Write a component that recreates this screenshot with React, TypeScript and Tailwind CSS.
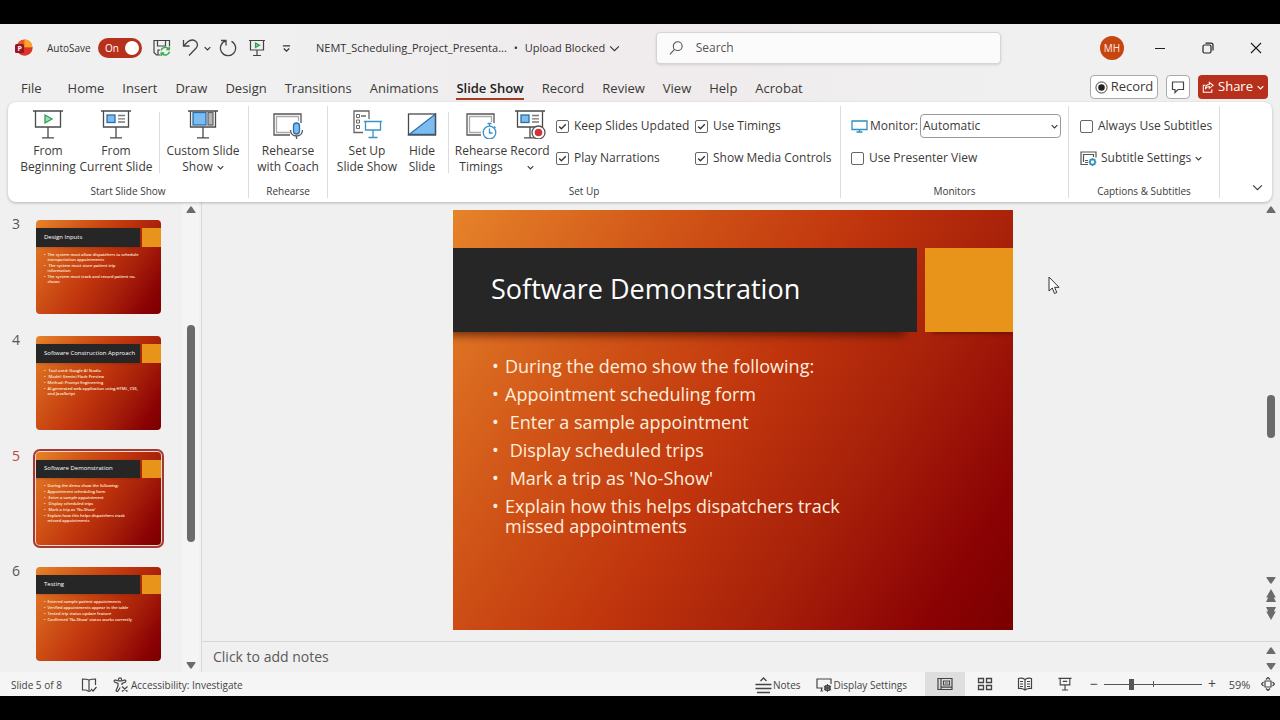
import type { ReactNode } from 'react';

const tabs = [
  'Home', 'Insert', 'Draw', 'Design', 'Transitions', 'Animations', 'Slide Show',
  'Record', 'Review', 'View', 'Help', 'Acrobat',
];

const slides = [
  {
    id: 3,
    title: 'Design Inputs',
    items: ['The system must allow dispatchers to schedule\ntransportation appointments', ' The system must store patient trip\ninformation', 'The system must track and record patient no-\nshows'],
  },
  {
    id: 4,
    title: 'Software Construction Approach',
    items: [' Tool used: Google AI Studio', ' Model: Gemini Flash Preview', 'Method: Prompt Engineering', 'AI-generated web application using HTML, CSS,\nand JavaScript'],
  },
  {
    id: 5,
    title: 'Software Demonstration',
    items: ['During the demo show the following:', 'Appointment scheduling form', ' Enter a sample appointment', ' Display scheduled trips', " Mark a trip as 'No-Show'", 'Explain how this helps dispatchers track\nmissed appointments'],
  },
  {
    id: 6,
    title: 'Testing',
    items: ['Entered sample patient appointments', 'Verified appointments appear in the table', 'Tested trip status update feature', "Confirmed 'No-Show' status works correctly"],
  },
];

const slideBg = 'bg-[linear-gradient(123deg,#e6832a_0%,#d05417_28%,#c0350d_50%,#a8220a_68%,#8b0204_89%,#7a0000_100%)]';

function Chevron({ className = 'w-2 h-2', thin = false }: { className?: string; thin?: boolean }) {
  return (
    <svg viewBox="0 0 10 10" className={className} fill="none" stroke="currentColor" strokeWidth={thin ? 1 : 1.6}>
      <path d="M1 3l4 4 4-4" />
    </svg>
  );
}

function Triangle({ down = false }: { down?: boolean }) {
  return (
    <svg viewBox="0 0 10 8" className="w-[10px] h-2 shrink-0 fill-[#6b6b6b]">
      <path d={down ? 'M1 1h8q1 0 .4 1L5.8 7.3q-.8.9-1.6 0L.6 2Q0 1 1 1z' : 'M1 7h8q1 0 .4-1L5.8.7q-.8-.9-1.6 0L.6 6Q0 7 1 7z'} />
    </svg>
  );
}

function DoubleTriangle({ down = false }: { down?: boolean }) {
  return (
    <svg viewBox="0 0 10 13" className="w-[10px] h-[13px] shrink-0 fill-[#6b6b6b]">
      <path d={down ? 'M0 0h10L7.8 4.500H9.800L5 13 .2 4.500h2z' : 'M5 0l4.800 8.500h-2L10 13H0l2.200-4.500h-2z'} />
    </svg>
  );
}

/* Projection screen on a stand, shared by most ribbon icons */
function Screen({ children }: { children?: ReactNode }) {
  return (
    <svg viewBox="0 0 32 30" className="w-8 h-[30px]" fill="none" stroke="#4a4a4a" strokeWidth="1.3">
      <path d="M3.500 2.500v15.500h25V2.500M1 2h30M16 18v10.500M10 28.800h12" />
      {children}
    </svg>
  );
}

function Content() {
  return (
    <>
      <rect x="7" y="6" width="8" height="7.5" fill="#7cbcf0" stroke="#2b6fa8" />
      <path d="M18 6.500h7M18 9.800h7M18 13h7" stroke="#777" />
    </>
  );
}

function RibbonButton({ icon, lines, width, chevron }: { icon: ReactNode; lines: string[]; width: string; chevron?: boolean }) {
  return (
    <button className={`${width} shrink-0 flex flex-col items-center text-xs leading-4 whitespace-nowrap`}>
      <span className="h-[34px] flex items-start justify-center">{icon}</span>
      {lines.map((line, i) => (
        <span key={line} className="flex items-center justify-center gap-1">
          {line}
          {chevron && i === 1 && <Chevron className="w-[7px] h-[7px]" />}
        </span>
      ))}
      {chevron && lines.length === 1 && <Chevron className="w-[7px] h-[7px] mt-[5px]" />}
    </button>
  );
}

function Group({ label, width, children }: { label: string; width: string; children: ReactNode }) {
  return (
    <div className={`${width} shrink-0 my-1 pt-[3px] border-r border-[#dcdcdc] flex flex-col`}>
      <div className="flex flex-1">{children}</div>
      <div className="h-[14px] text-center text-[10px] leading-[14px]">{label}</div>
    </div>
  );
}

function Check({ label, checked = false }: { label: string; checked?: boolean }) {
  return (
    <label className="h-8 flex items-center gap-[5px] text-xs whitespace-nowrap">
      <span className="relative w-[13px] h-[13px] shrink-0">
        <input type="checkbox" defaultChecked={checked} className="peer block w-[13px] h-[13px] appearance-none border border-[#666] rounded-[2px] bg-white" />
        <svg viewBox="0 0 13 13" className="absolute inset-0 hidden peer-checked:block pointer-events-none" fill="none" stroke="#333" strokeWidth="1.3">
          <path d="M3.200 6.500l2.200 2.300 4.400-4.600" />
        </svg>
      </span>
      {label}
    </label>
  );
}

function Thumbnail({ title, items }: { title: string; items: string[] }) {
  return (
    <div className={`w-[125px] aspect-[4/3] rounded-[4px] overflow-hidden text-left text-white flex flex-col ${slideBg}`}>
      <div className="h-[20%] mt-2 flex gap-[2px]">
        <div className="w-[83%] pl-2 bg-[#262626] flex items-center text-[6px] font-medium whitespace-nowrap shadow-sm">{title}</div>
        <div className="flex-1 bg-[#e8941a]" />
      </div>
      <ul className="pl-2 pt-[5px] flex flex-col gap-[1px] text-[4px] leading-[5px] font-semibold text-[#fdeede]">
        {items.map((item) => (
          <li key={item} className="flex gap-[2px]">
            <span>•</span>
            <span className="whitespace-pre">{item}</span>
          </li>
        ))}
      </ul>
    </div>
  );
}

function TitleBar() {
  return (
    <header className="h-12 flex items-center">
      <div className="w-[656px] shrink-0 flex items-center pl-[15px] text-[#333]">
        <svg viewBox="0 0 18 18" className="w-[18px] h-[18px]">
          <circle cx="9.5" cy="8.5" r="8" fill="#e8562a" />
          <path d="M9.500.5a8 8 0 018 8h-8z" fill="#f9a52b" />
          <path d="M17.500 8.500a8 8 0 01-14 5.300l6-5.300z" fill="#d9352a" />
          <rect y="5" width="9" height="9" rx="1.5" fill="#9c1323" />
          <text x="2.5" y="12" fontSize="7" fontWeight="700" fill="#fff" fontFamily="Open Sans, sans-serif">P</text>
        </svg>
        <span id="autosave" className="ml-[14px] w-[45px] text-[10px] whitespace-nowrap">AutoSave</span>
        <button role="switch" aria-checked="true" aria-labelledby="autosave" className="ml-[6px] w-11 h-5 rounded-full bg-[#b7301c] flex items-center justify-between pl-[7px] pr-[3px] text-[10px] text-white">
          On
          <span className="w-[14px] h-[14px] rounded-full bg-white" />
        </button>
        <button aria-label="Save" className="ml-[11px]">
          <svg viewBox="0 0 18 18" className="w-[18px] h-[18px]" fill="none" stroke="#444" strokeWidth="1.2">
            <path d="M7 16H3.500L1 13.500V1.500h15.500V7M4.500 1.500V7h8V1.500M5 16v-5h2" />
            <path d="M8 11.500a4.300 4.300 0 017.500-1.500M16.300 7.500v3h-3M16.500 12.800A4.300 4.300 0 019 14.500M8.200 17v-3h3" stroke="#3fa950" strokeWidth="1.5" />
          </svg>
        </button>
        <button aria-label="Undo" className="ml-[11px]">
          <svg viewBox="0 0 18 18" className="w-[18px] h-[18px]" fill="none" stroke="#444" strokeWidth="1.3">
            <path d="M1.500 1v6h6M1.800 6.800L5.500 3c6-5 13 1 8.500 6.300L7 16.500" />
          </svg>
        </button>
        <button aria-label="Undo options" className="ml-1"><Chevron className="w-[7px] h-[7px]" /></button>
        <button aria-label="Redo" className="ml-2">
          <svg viewBox="0 0 18 18" className="w-[18px] h-[18px]" fill="none" stroke="#444" strokeWidth="1.3">
            <path d="M2 1.500h5V6.500M6.800 1.800A7.600 7.600 0 1012.500 2.300" />
          </svg>
        </button>
        <button aria-label="Start from beginning" className="ml-[11px]">
          <svg viewBox="0 0 18 18" className="w-[18px] h-[18px]" fill="none" stroke="#444" strokeWidth="1.2">
            <path d="M2.500 1.500v9.500h13V1.500M1 1.500h16M9 11v5.500M5 16.500h8" />
            <path d="M7.500 4v4.500l4-2.200z" fill="#7fd39a" stroke="#2f9e51" />
          </svg>
        </button>
        <button aria-label="Customize toolbar" className="ml-4">
          <svg viewBox="0 0 10 10" className="w-[9px] h-[9px]" fill="none" stroke="#333" strokeWidth="1.4">
            <path d="M1 2h8M2 5l3 3 3-3" />
          </svg>
        </button>
        <button className="ml-[25px] flex items-center text-[11px] whitespace-nowrap">
          NEMT_Scheduling_Project_Presenta...
          <span className="w-[18px] text-center">•</span>
          Upload Blocked
          <Chevron thin className="w-[11px] h-[11px] ml-1" />
        </button>
      </div>
      <label className="flex-1 max-w-[345px] h-8 flex items-center gap-3 px-3 bg-[#fbfbfb] border border-[#d8d4d5] rounded shadow-sm text-[#555]">
        <svg viewBox="0 0 16 16" className="w-4 h-4" fill="none" stroke="#555" strokeWidth="1.2">
          <circle cx="9.5" cy="6" r="4.8" />
          <path d="M6 9.500L1 15" />
        </svg>
        <input type="search" aria-label="Search" placeholder="Search" className="w-full outline-none text-xs placeholder:text-[#555]" />
      </label>
      <div className="ml-auto flex items-center">
        <button className="w-6 h-6 mr-3 rounded-full bg-[#c64610] text-[10px] text-[#fde9e0]">MH</button>
        <button aria-label="Minimize" className="w-12 h-8 flex items-center justify-center"><span className="w-[10px] h-px bg-[#222]" /></button>
        <button aria-label="Restore" className="w-12 h-8 flex items-center justify-center">
          <svg viewBox="0 0 12 12" className="w-3 h-3" fill="none" stroke="#222" strokeWidth="1.2">
            <rect x="1" y="3" width="8" height="8" rx="1.5" />
            <path d="M3.500 1.200h5.500a2 2 0 012 2v5.300" />
          </svg>
        </button>
        <button aria-label="Close" className="w-12 h-8 flex items-center justify-center">
          <svg viewBox="0 0 12 12" className="w-3 h-3" stroke="#222" strokeWidth="1.2"><path d="M1 1l10 10M11 1L1 11" /></svg>
        </button>
      </div>
    </header>
  );
}

function TabBar() {
  return (
    <div className="h-[30px] flex items-start pl-[21px] pr-3 text-[#3b3a39]">
      <nav className="flex gap-[18px] pt-[6px] text-[13px] leading-5 whitespace-nowrap">
        <button className="mr-2 border-b-2 border-transparent">File</button>
        {tabs.map((tab) => (
          <button key={tab} className={tab === 'Slide Show' ? 'font-semibold text-[#222] border-b-2 border-[#a33a22]' : 'border-b-2 border-transparent'}>
            {tab}
          </button>
        ))}
      </nav>
      <div className="ml-auto mt-[3px] flex gap-2 text-[13px] whitespace-nowrap">
        <button className="w-[68px] h-6 flex items-center justify-center gap-[3px] bg-white border border-[#aaa] rounded">
          <svg viewBox="0 0 14 14" className="w-[13px] h-[13px] shrink-0"><circle cx="7" cy="7" r="6" fill="none" stroke="#333" /><circle cx="7" cy="7" r="3.5" fill="#222" /></svg>
          Record
        </button>
        <button aria-label="Comments" className="w-6 h-6 flex items-center justify-center bg-white border border-[#aaa] rounded">
          <svg viewBox="0 0 14 14" className="w-[14px] h-[14px]" fill="none" stroke="#444" strokeWidth="1.2"><path d="M1.500 2h11v7.500H7L4 12.500v-3H1.500z" /></svg>
        </button>
        <button className="w-[70px] h-6 flex items-center justify-center gap-1 bg-[#b7301c] text-white rounded">
          <svg viewBox="0 0 14 14" className="w-3 h-3 shrink-0" fill="none" stroke="#fff" strokeWidth="1.2"><path d="M4 5H1.500v8h10V9.500M8.500 1.500L13 5 8.500 8.500v-2C6 6.500 5 7.500 4 9.500c0-4 2-5.500 4.500-5.500z" /></svg>
          Share
          <Chevron className="w-[7px] h-[7px]" />
        </button>
      </div>
    </div>
  );
}

function Ribbon() {
  return (
    <div className="relative z-10 mx-2 h-[100px] bg-white rounded-lg shadow-[0_1px_3px_rgba(0,0,0,0.25)] flex text-[#3b3a39]">
      <Group label="Start Slide Show" width="w-[241px]">
        <RibbonButton width="w-[80px]" lines={['From', 'Beginning']} icon={<Screen><path d="M13 6v8l7-4z" fill="#9be0b0" stroke="#2f9e51" /></Screen>} />
        <RibbonButton width="w-[56px]" lines={['From', 'Current Slide']} icon={<Screen><Content /></Screen>} />
        <div className="ml-[15px] mt-[3px] mb-[11px] w-px bg-[#dcdcdc]" />
        <RibbonButton width="w-[86px]" chevron lines={['Custom Slide', 'Show']} icon={
          <Screen>
            <rect x="6" y="3.5" width="13" height="12.5" fill="#7cbcf0" stroke="#2b6fa8" />
            <rect x="21" y="3.5" width="5" height="12.5" fill="#b5b5b5" stroke="#666" />
          </Screen>
        } />
      </Group>
      <Group label="Rehearse" width="w-[79px]">
        <RibbonButton width="w-full" lines={['Rehearse', 'with Coach']} icon={
          <svg viewBox="0 0 32 30" className="w-8 h-[30px]" fill="none" stroke="#555" strokeWidth="1.3">
            <path d="M18 26H2V5h27v9" />
            <path d="M18 23.500H4.500V7.500h22V12" stroke="#aaa" />
            <path d="M18.500 21c0 8 12 8 12 0M24.500 27v3.500" />
            <rect x="21.5" y="14" width="6" height="11" rx="3" fill="#7cbcf0" stroke="#2b6fa8" />
          </svg>
        } />
      </Group>
      <Group label="Set Up" width="w-[513px]">
        <RibbonButton width="w-[78px]" lines={['Set Up', 'Slide Show']} icon={
          <svg viewBox="0 0 32 30" className="w-8 h-[30px]" fill="none" stroke="#666" strokeWidth="1.3">
            <path d="M12 23.500H3V2h15v8M10 7h5" />
            <path d="M5.500 5.500h3v3h-3zM5.500 11h3v3h-3zM5.500 16.500h3v3h-3z" strokeWidth="1" />
            <path d="M13 12.500h18M14.500 12.500v8.500h15v-8.500M22 21v7.500M17.500 28.500h9" stroke="#3a93c8" />
          </svg>
        } />
        <RibbonButton width="w-[32px]" lines={['Hide', 'Slide']} icon={
          <svg viewBox="0 0 32 30" className="w-8 h-[30px]" fill="none" stroke="#4a4a4a" strokeWidth="1.3">
            <path d="M29.500 5v20.500H3z" fill="#7cbcf0" stroke="#2b6fa8" />
            <rect x="2.5" y="5" width="27" height="21" />
          </svg>
        } />
        <div className="ml-[10px] mt-[3px] mb-[11px] w-px bg-[#dcdcdc]" />
        <RibbonButton width="w-[64px]" lines={['Rehearse', 'Timings']} icon={
          <svg viewBox="0 0 32 30" className="w-8 h-[30px]" fill="none" stroke="#555" strokeWidth="1.3">
            <path d="M16 26H2V5h27v9" />
            <path d="M16 23.500H4.500V7.500h22V13" stroke="#aaa" />
            <circle cx="24.5" cy="23.5" r="6.3" stroke="#3a93c8" fill="#fff" />
            <path d="M24.500 19.500v4.500h3M22.500 14.500h4M24.500 14.500v2.500M29 17.500l1.500 1.500" stroke="#3a93c8" />
          </svg>
        } />
        <RibbonButton width="w-[34px]" chevron lines={['Record']} icon={
          <Screen>
            <Content />
            <circle cx="24.5" cy="23.5" r="6.5" fill="#fff" stroke="#555" />
            <circle cx="24.5" cy="23.5" r="3.8" fill="#d13438" stroke="none" />
          </Screen>
        } />
        <div className="ml-[9px] mt-px w-[139px]">
          <Check label="Keep Slides Updated" checked />
          <Check label="Play Narrations" checked />
        </div>
        <div className="mt-px">
          <Check label="Use Timings" checked />
          <Check label="Show Media Controls" checked />
        </div>
      </Group>
      <Group label="Monitors" width="w-[228px]">
        <div className="mt-px pl-[10px]">
          <div className="h-8 flex items-center text-xs">
            <svg viewBox="0 0 17 14" className="w-[17px] h-[14px]" fill="none" stroke="#2e8fc0" strokeWidth="1.3">
              <path d="M1 2h15v8.500H1zM8.500 10.500V13M5.500 13h6" />
            </svg>
            <label htmlFor="monitor" className="ml-[2px] w-[50px] whitespace-nowrap">Monitor:</label>
            <span className="relative">
              <select id="monitor" className="block w-[141px] h-6 pl-[2px] appearance-none border border-[#999] rounded bg-white">
                <option>Automatic</option>
              </select>
              <Chevron className="absolute right-[3px] top-[9px] w-[7px] h-[7px] pointer-events-none" />
            </span>
          </div>
          <Check label="Use Presenter View" />
        </div>
      </Group>
      <Group label="Captions & Subtitles" width="w-[151px]">
        <div className="mt-px pl-[11px]">
          <Check label="Always Use Subtitles" />
          <button className="h-8 flex items-center gap-1 text-xs whitespace-nowrap">
            <svg viewBox="0 0 17 15" className="w-[17px] h-[15px]" fill="none" stroke="#555" strokeWidth="1.2">
              <path d="M8 13.500H1V1h15v5.500M3.500 11V3.500h10V6M5 9.500h3M5 11.500h3" />
              <circle cx="12.5" cy="11" r="2.6" stroke="#2e8fc0" strokeWidth="1.6" />
              <path d="M12.500 7v1.500M12.500 13.500V15M8.500 11H10M15 11h1.500M9.800 8.200l1 1M14.200 12.800l1 1M15.200 8.200l-1 1M10.800 12.800l-1 1" stroke="#2e8fc0" />
            </svg>
            Subtitle Settings
            <Chevron className="w-[7px] h-[7px]" />
          </button>
        </div>
      </Group>
      <button aria-label="Collapse ribbon" className="ml-auto mr-[9px] mb-[9px] self-end"><Chevron thin className="w-[11px] h-[11px]" /></button>
    </div>
  );
}

function SlidePanel() {
  return (
    <aside className="w-[202px] shrink-0 border-r border-[#dadada] flex">
      <ol className="flex-1 pt-[18px] flex flex-col gap-[22px]">
        {slides.map((slide) => (
          <li key={slide.id} className="flex">
            <span className={`w-9 pl-3 -mt-[6px] text-sm ${slide.id === 5 ? 'text-[#c0443c]' : 'text-[#555]'}`}>{slide.id}</span>
            <button className={slide.id === 5 ? 'rounded-[4px] ring-2 ring-[#a33b32] ring-offset-1 ring-offset-[#f5d5cc]' : ''}>
              <Thumbnail title={slide.title} items={slide.items} />
            </button>
          </li>
        ))}
      </ol>
      <div className="w-[17px] mr-[2px] pt-1 pb-[3px] bg-[#f4f4f4] flex flex-col items-center">
        <Triangle />
        <div className="h-[111px]" />
        <div className="w-2 h-[217px] rounded-full bg-[#6b6b6b]" />
        <div className="mt-auto"><Triangle down /></div>
      </div>
    </aside>
  );
}

function SlideEditor() {
  const slide = slides[2];
  return (
    <div className="flex-1 flex">
      <div className="flex-1 flex justify-center pt-2 pb-[10px] pl-[2px]">
        <div className={`w-full max-w-[560px] self-start aspect-[4/3] overflow-hidden text-white flex flex-col ${slideBg}`}>
          <div className="h-[20%] mt-[38px] flex gap-2">
            <h1 className="flex-1 bg-[#262626] pl-[38px] pb-[2px] flex items-center text-[27px] shadow-[-8px_8px_8px_-4px_rgba(60,10,0,0.6)]">{slide.title}</h1>
            <div className="w-[88px] bg-[#e8941a] shadow-[4px_4px_4px_-3px_rgba(60,10,0,0.6)]" />
          </div>
          <ul className="pt-6 pl-[39px] flex flex-col gap-2 text-lg leading-5 font-medium text-[#fdeede]">
            {slide.items.map((item) => (
              <li key={item} className="flex">
                <span className="w-[13px] shrink-0">•</span>
                <span className="whitespace-pre">{item}</span>
              </li>
            ))}
          </ul>
        </div>
      </div>
      <div className="w-[18px] pt-1 pb-[5px] flex flex-col items-center">
        <Triangle />
        <div className="h-[181px]" />
        <div className="w-2 h-[43px] rounded-full bg-[#6b6b6b]" />
        <div className="mt-auto mb-4 flex flex-col items-center gap-[5px]">
          <Triangle down />
          <DoubleTriangle />
          <DoubleTriangle down />
        </div>
      </div>
      <svg viewBox="0 0 12 19" className="absolute left-[1048px] top-[276px] w-3 h-[19px]" fill="#fff" stroke="#333" strokeWidth="1">
        <path d="M1 1v14l3.300-3 2.200 5.500 2.300-1-2.200-5.200H11z" />
      </svg>
    </div>
  );
}

function StatusBar() {
  return (
    <footer className="h-6 bg-[#f5f5f5] flex items-center pl-[11px] text-[10px] text-[#444] whitespace-nowrap">
      <span className="w-[70px] pt-[2px]">Slide 5 of 8</span>
      <button aria-label="Spelling" className="pt-[2px]">
        <svg viewBox="0 0 16 16" className="w-4 h-4" fill="none" stroke="#444" strokeWidth="1.2">
          <path d="M8 13.500V3Q6 2 1.500 2v11H5l3 1.500M8 3q2-1 6.500-1v6M8 14.500l2-1M10 12l2 2 3.500-4" />
        </svg>
      </button>
      <button className="ml-4 pt-[2px] flex items-center gap-[2px]">
        <svg viewBox="0 0 16 16" className="w-4 h-4" fill="none" stroke="#444" strokeWidth="1.2">
          <circle cx="7" cy="2.5" r="1.6" />
          <path d="M5.500 4L2 3Q.5 3.500 1.500 5l3.500 1.500V9l-2 4.500q.5 1.500 2 .5l2.200-3.500M8.500 4L12 3q1.500.5.5 2L9 6.500V8M9 9.500l5.500 5M14.500 9.500l-5.500 5" />
        </svg>
        Accessibility: Investigate
      </button>
      <div className="ml-auto flex items-center">
        <button className="pt-[2px] flex items-center gap-px">
          <svg viewBox="0 0 17 17" className="w-[17px] h-[17px]" fill="none" stroke="#444" strokeWidth="1.3"><path d="M5.500 4l3-3 3 3M.5 7.500h16M.5 11.500h16M2 15.500h13" /></svg>
          Notes
        </button>
        <button className="ml-[15px] pt-[2px] flex items-center gap-[2px]">
          <svg viewBox="0 0 16 16" className="w-4 h-4" fill="none" stroke="#444" strokeWidth="1.2">
            <path d="M7 11H1V2h14v5M4.500 14H7M5.500 11v3" />
            <circle cx="11.5" cy="11" r="2.5" strokeWidth="1.6" />
            <path d="M11.500 7v8M7.800 9l7.400 4M15.200 9l-7.400 4" strokeWidth=".9" />
          </svg>
          Display Settings
        </button>
        <button aria-label="Normal view" className="ml-[18px] w-10 h-6 bg-[#dedede] flex items-center justify-center">
          <svg viewBox="0 0 16 14" className="w-4 h-[14px]" fill="none" stroke="#444" strokeWidth="1.2"><path d="M1 1.500h14v11H1zM4 1.500v11M6.500 4h6v4h-6zM4 10.200h11M8 6h3" /></svg>
        </button>
        <button aria-label="Slide sorter" className="w-10 h-6 flex items-center justify-center">
          <svg viewBox="0 0 16 14" className="w-4 h-[14px]" fill="none" stroke="#444" strokeWidth="1.3"><path d="M1.500 1.500h5v4h-5zM9.500 1.500h5v4h-5zM1.500 8.500h5v4h-5zM9.500 8.500h5v4h-5z" /></svg>
        </button>
        <button aria-label="Reading view" className="w-10 h-6 flex items-center justify-center">
          <svg viewBox="0 0 16 14" className="w-4 h-[14px]" fill="none" stroke="#444" strokeWidth="1.2"><path d="M8 2.500Q5 .5 1.500 1.500v10Q5 11 8 13q3-2 6.500-1.500v-10Q11 .5 8 2.500zM8 2.500V13M3 4.500h3M3 7h3M3 9.500h3M10 4.500h3M10 7h3M10 9.500h3" /></svg>
        </button>
        <button aria-label="Slide show" className="w-10 h-6 flex items-center justify-center">
          <svg viewBox="0 0 16 16" className="w-[14px] h-[14px]" fill="none" stroke="#444" strokeWidth="1.3"><path d="M.5 1.500h15M2.500 1.500v7.500h11V1.500M8 9v5.500M4.500 14.800h7M5.500 5h5" /></svg>
        </button>
        <button aria-label="Zoom out" className="ml-[3px] w-3 text-sm leading-none">−</button>
        <span className="relative mx-1 w-[98px] h-4 flex items-center">
          <span className="absolute left-[49px] top-[5px] w-px h-[6px] bg-[#555]" />
          <input type="range" aria-label="Zoom" min={0} max={100} defaultValue={27} className="relative w-full h-4 appearance-none bg-transparent [&::-webkit-slider-runnable-track]:h-px [&::-webkit-slider-runnable-track]:bg-[#555] [&::-webkit-slider-thumb]:appearance-none [&::-webkit-slider-thumb]:w-[5px] [&::-webkit-slider-thumb]:h-[11px] [&::-webkit-slider-thumb]:-mt-[5px] [&::-webkit-slider-thumb]:bg-[#555]" />
        </span>
        <button aria-label="Zoom in" className="w-3 text-sm leading-none">+</button>
        <button className="w-[43px] pt-[2px] text-center text-[11px]">59%</button>
        <button aria-label="Fit to window" className="mr-[5px]">
          <svg viewBox="0 0 14 14" className="w-[14px] h-[14px]" fill="none" stroke="#444" strokeWidth="1.2"><path d="M4 4h6v6H4zM5 2.500l2-2 2 2M5 11.500l2 2 2-2M2.500 5l-2 2 2 2M11.500 5l2 2-2 2" /></svg>
        </button>
      </div>
    </footer>
  );
}

export default function App() {
  return (
    <div className="relative min-h-screen py-6 bg-black flex flex-col font-['Open_Sans',sans-serif]">
      <div className="flex-1 flex flex-col bg-[#f0f0f0] bg-[linear-gradient(90deg,#f0f0f0_20%,#f0ebec_50%,#f0f0f0_80%)]">
        <TitleBar />
        <TabBar />
        <Ribbon />
        <div className="flex-1 flex bg-[#f0f0f0]">
          <SlidePanel />
          <main className="flex-1 flex flex-col">
            <SlideEditor />
            <div className="h-[31px] border-t border-[#d6d6d6] flex">
              <input aria-label="Notes" placeholder="Click to add notes" className="flex-1 pl-[11px] outline-none text-sm placeholder:text-[#5a5a5a]" />
              <div className="w-[18px] pt-[5px] pb-[2px] flex flex-col items-center justify-between">
                <Triangle />
                <Triangle down />
              </div>
            </div>
          </main>
        </div>
        <StatusBar />
      </div>
    </div>
  );
}
